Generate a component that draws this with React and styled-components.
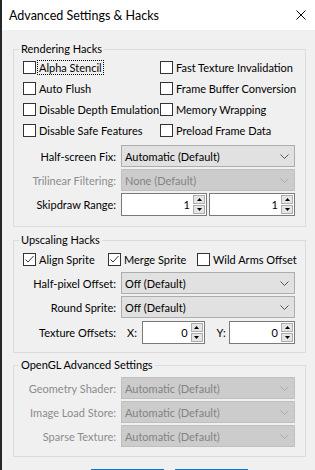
import styled, { createGlobalStyle } from 'styled-components';

const GlobalStyle = createGlobalStyle`
  html, body {
    margin: 0;
    padding: 0;
    background: #f0f0f0;
  }
  body {
    font-family: Lato, "Noto Sans", sans-serif;
    font-size: 11px;
    color: #000;
  }
`;

const Window = styled.div`
  width: 315px;
  height: 470px;
  box-sizing: border-box;
  border-left: 2px solid #262626;
  background: #f0f0f0;
  overflow: hidden;
  display: flex;
  flex-direction: column;
`;
const TitleBar = styled.div`
  height: 30px;
  flex-shrink: 0;
  background: #fff;
  display: flex;
  align-items: center;
  justify-content: space-between;
  padding: 0 9px 0 7px;
`;
const TitleText = styled.div`
  font-size: 12.5px;
`;
const Body = styled.div`
  padding: 11px 9px 0 11px;
  display: flex;
  flex-direction: column;
`;
const Group = styled.fieldset`
  margin: ${(p) => p.$mt || 0}px 0 0 0;
  padding: 0 0 ${(p) => p.$pb}px 0;
  border: 1px solid #dcdcdc;
  min-width: 0;
`;
const Legend = styled.legend`
  margin-left: 5px;
  padding: 0 2px;
  line-height: 16px;
`;
const CheckGrid = styled.div`
  display: grid;
  grid-template-columns: ${(p) => p.$cols};
  grid-auto-rows: ${(p) => p.$row}px;
  padding-left: 9px;
`;
const CheckItem = styled.label`
  display: flex;
  align-items: center;
  gap: 2px;
  white-space: nowrap;
`;
const Box = styled.span`
  width: 13px;
  height: 13px;
  box-sizing: border-box;
  border: 1px solid #333;
  background: #fff;
  display: flex;
  align-items: center;
  justify-content: center;
  flex-shrink: 0;
`;
const CheckLabel = styled.span`
  line-height: 13px;
  padding: 0 1px;
  outline: ${(p) => (p.$focus ? '1px dotted #000' : 'none')};
`;
const Rows = styled.div`
  margin-top: ${(p) => p.$mt}px;
  display: flex;
  flex-direction: column;
`;
const FormRow = styled.div`
  display: grid;
  grid-template-columns: 102px 174px;
  column-gap: 5px;
  align-items: center;
  height: ${(p) => p.$h || 24}px;
`;
const FieldLabel = styled.span`
  text-align: right;
  white-space: nowrap;
  color: ${(p) => (p.$disabled ? '#8c8c8c' : '#000')};
`;
const Combo = styled.div`
  height: 22px;
  box-sizing: border-box;
  border: 1px solid ${(p) => (p.$disabled ? '#bfbfbf' : '#adadad')};
  background: ${(p) => (p.$disabled ? '#cccccc' : '#e1e1e1')};
  color: ${(p) => (p.$disabled ? '#838383' : '#000')};
  display: flex;
  align-items: center;
  justify-content: space-between;
  padding: 0 5px 0 3px;
`;
const Pair = styled.div`
  display: flex;
  align-items: center;
  gap: ${(p) => p.$gap || 0}px;
`;
const AxisLabel = styled.span`
  width: ${(p) => p.$w}px;
  padding-left: ${(p) => p.$pl}px;
  box-sizing: border-box;
`;
const Spin = styled.div`
  width: ${(p) => p.$w}px;
  height: 23px;
  box-sizing: border-box;
  border: 1px solid #7a7a7a;
  background: #fff;
  display: flex;
  padding: 1px;
`;
const SpinValue = styled.span`
  flex: 1;
  text-align: right;
  padding-right: 3px;
  line-height: 19px;
`;
const Arrows = styled.div`
  width: 12px;
  display: flex;
  flex-direction: column;
  gap: 1px;
`;
const ArrowBtn = styled.div`
  flex: 1;
  border: 1px solid #adadad;
  background: #e5e5e5;
  display: flex;
  align-items: center;
  justify-content: center;
`;
const Buttons = styled.div`
  margin-top: 12px;
  padding-left: 78px;
  display: flex;
  gap: 11px;
`;
const Button = styled.div`
  width: 73px;
  height: 23px;
  box-sizing: border-box;
  border: 1px solid #0078d7;
  background: #e1e1e1;
`;

function Check({ checked, focus, children }) {
  return (
    <CheckItem>
      <Box>
        {checked && (
          <svg width="11" height="11" viewBox="0 0 11 11">
            <path d="M1.5 5.5 L4 8 L9.5 2" fill="none" stroke="#333" strokeWidth="1" />
          </svg>
        )}
      </Box>
      <CheckLabel $focus={focus}>{children}</CheckLabel>
    </CheckItem>
  );
}

function Select({ value, disabled }) {
  return (
    <Combo $disabled={disabled}>
      <span>{value}</span>
      <svg width="9" height="5" viewBox="0 0 9 5">
        <path d="M0.5 0.5 L4.5 4.5 L8.5 0.5" fill="none" stroke={disabled ? '#a8a8a8' : '#555'} strokeWidth="1" />
      </svg>
    </Combo>
  );
}

function SpinBox({ value, w }) {
  return (
    <Spin $w={w}>
      <SpinValue>{value}</SpinValue>
      <Arrows>
        <ArrowBtn>
          <svg width="5" height="3" viewBox="0 0 5 3">
            <path d="M0 3 L2.5 0 L5 3 Z" fill="#000" />
          </svg>
        </ArrowBtn>
        <ArrowBtn>
          <svg width="5" height="3" viewBox="0 0 5 3">
            <path d="M0 0 L2.5 3 L5 0 Z" fill="#000" />
          </svg>
        </ArrowBtn>
      </Arrows>
    </Spin>
  );
}

export default function App() {
  return (
    <>
      <GlobalStyle />
      <Window>
        <TitleBar>
          <TitleText>Advanced Settings &amp; Hacks</TitleText>
          <svg width="10" height="10" viewBox="0 0 10 10">
            <path d="M0.5 0.5 L9.5 9.5 M9.5 0.5 L0.5 9.5" stroke="#000" strokeWidth="1" />
          </svg>
        </TitleBar>
        <Body>
          <Group $pb={9}>
            <Legend>Rendering Hacks</Legend>
            <CheckGrid $cols="137px 1fr" $row={21}>
              <Check focus>Alpha Stencil</Check>
              <Check>Fast Texture Invalidation</Check>
              <Check>Auto Flush</Check>
              <Check>Frame Buffer Conversion</Check>
              <Check>Disable Depth Emulation</Check>
              <Check>Memory Wrapping</Check>
              <Check>Disable Safe Features</Check>
              <Check>Preload Frame Data</Check>
            </CheckGrid>
            <Rows $mt={3}>
              <FormRow>
                <FieldLabel>Half-screen Fix:</FieldLabel>
                <Select value="Automatic (Default)" />
              </FormRow>
              <FormRow>
                <FieldLabel $disabled>Trilinear Filtering:</FieldLabel>
                <Select value="None (Default)" disabled />
              </FormRow>
              <FormRow $h={25}>
                <FieldLabel>Skipdraw Range:</FieldLabel>
                <Pair $gap={2}>
                  <SpinBox value="1" w={86} />
                  <SpinBox value="1" w={86} />
                </Pair>
              </FormRow>
            </Rows>
          </Group>

          <Group $mt={5} $pb={7}>
            <Legend>Upscaling Hacks</Legend>
            <CheckGrid $cols="85px 89px 1fr" $row={22}>
              <Check checked>Align Sprite</Check>
              <Check checked>Merge Sprite</Check>
              <Check>Wild Arms Offset</Check>
            </CheckGrid>
            <Rows $mt={1}>
              <FormRow>
                <FieldLabel>Half-pixel Offset:</FieldLabel>
                <Select value="Off (Default)" />
              </FormRow>
              <FormRow>
                <FieldLabel>Round Sprite:</FieldLabel>
                <Select value="Off (Default)" />
              </FormRow>
              <FormRow $h={26}>
                <FieldLabel>Texture Offsets:</FieldLabel>
                <Pair>
                  <AxisLabel $w={21} $pl={6}>X:</AxisLabel>
                  <SpinBox value="0" w={63} />
                  <AxisLabel $w={25} $pl={12}>Y:</AxisLabel>
                  <SpinBox value="0" w={66} />
                </Pair>
              </FormRow>
            </Rows>
          </Group>

          <Group $mt={4} $pb={8}>
            <Legend>OpenGL Advanced Settings</Legend>
            <Rows $mt={3}>
              <FormRow>
                <FieldLabel $disabled>Geometry Shader:</FieldLabel>
                <Select value="Automatic (Default)" disabled />
              </FormRow>
              <FormRow>
                <FieldLabel $disabled>Image Load Store:</FieldLabel>
                <Select value="Automatic (Default)" disabled />
              </FormRow>
              <FormRow>
                <FieldLabel $disabled>Sparse Texture:</FieldLabel>
                <Select value="Automatic (Default)" disabled />
              </FormRow>
            </Rows>
          </Group>

          <Buttons>
            <Button />
            <Button />
          </Buttons>
        </Body>
      </Window>
    </>
  );
}
